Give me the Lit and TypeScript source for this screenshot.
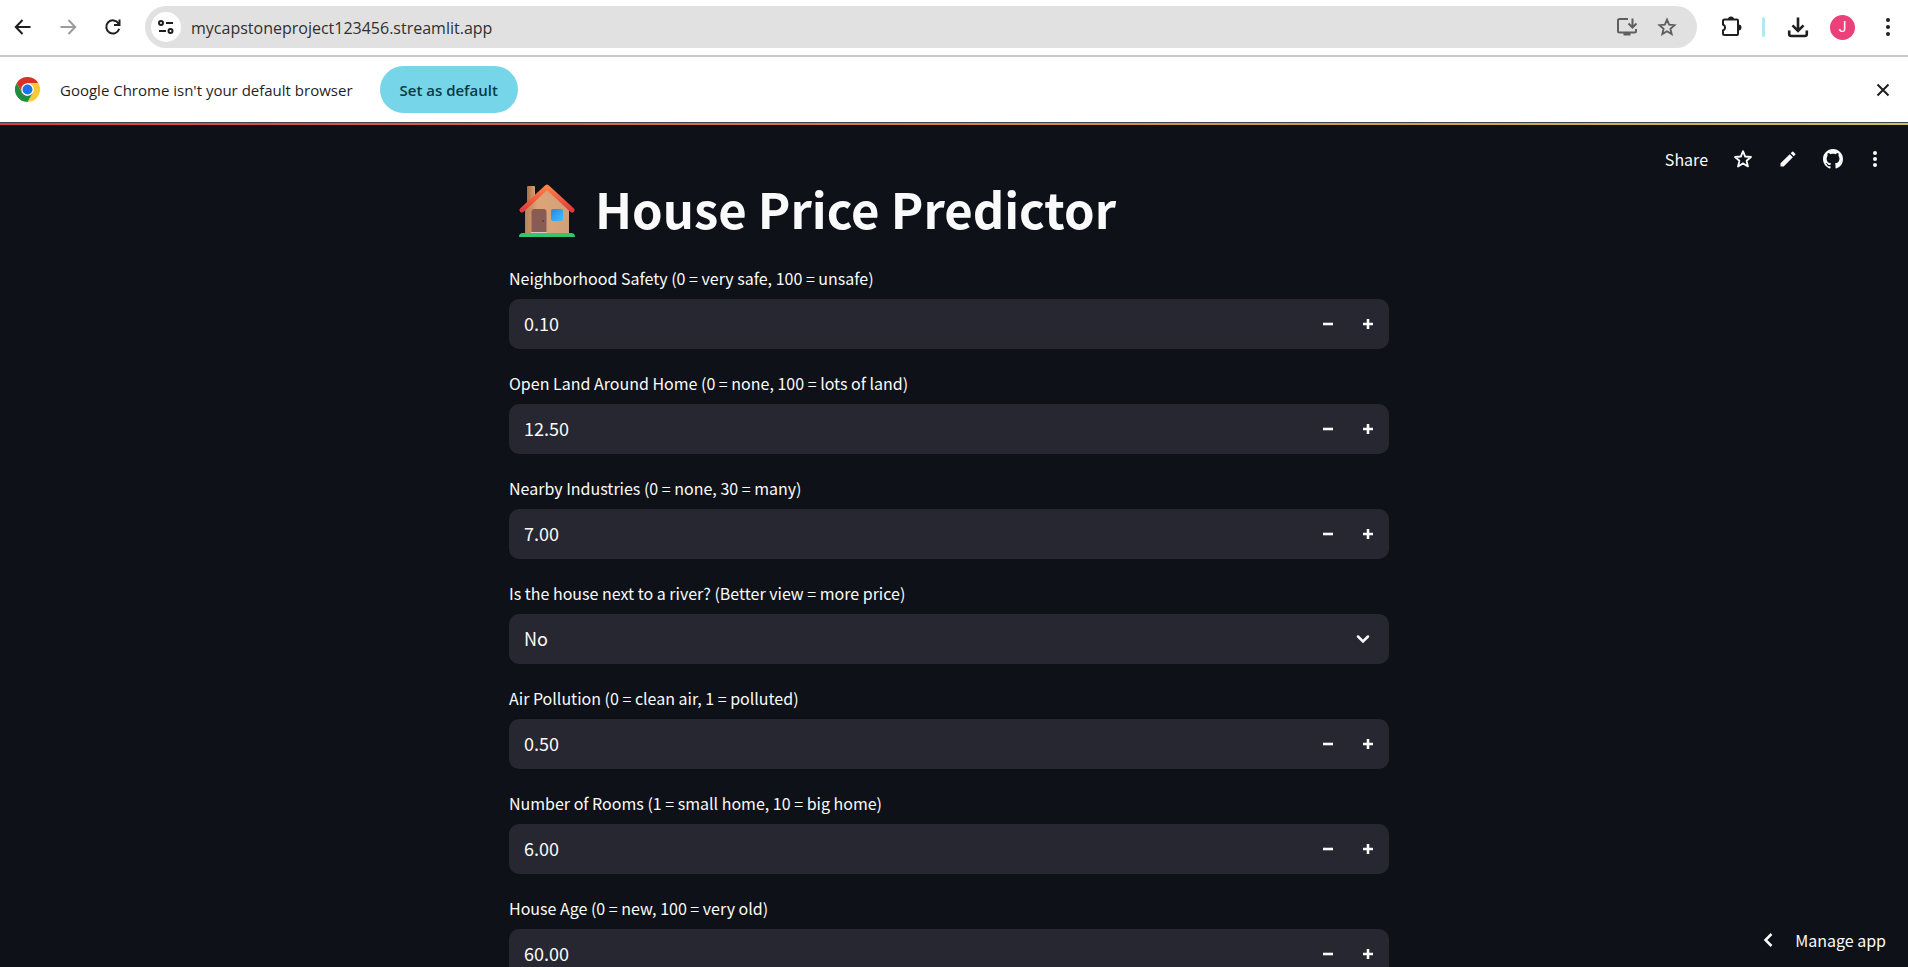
import { LitElement, html, css } from "lit";
import { customElement, property } from "lit/decorators.js";

@customElement("browser-bar")
export class BrowserBar extends LitElement {
  static styles = css`
    :host { display: block; background: #fff; color: #1f1f1f; font-family: "Open Sans", sans-serif; }
    button { border: 0; padding: 0; background: none; color: inherit; font: inherit; display: grid; place-items: center; flex: none; }
    svg { display: block; fill: none; stroke: currentColor; stroke-width: 2; }
    .toolbar { display: flex; align-items: center; height: 55px; box-sizing: border-box; padding: 0 7px 1px 0; }
    .nav { width: 45px; height: 40px; }
    .nav.off { color: #9c9c9c; }
    .omnibox { flex: 1; min-width: 0; display: flex; align-items: center; height: 42px; margin-left: 10px; padding: 0 10px 0 6px; box-sizing: border-box; border-radius: 21px; background: #e1e1e1; }
    .site { width: 30px; height: 30px; border-radius: 50%; background: #fff; }
    .url { flex: 1; min-width: 0; border: 0; outline: 0; background: none; color: #303030; font: 16px/24px "Open Sans", sans-serif; padding: 1px 0 0 10px; }
    .tool { width: 40px; height: 40px; color: #5f5f5f; }
    .right { display: flex; align-items: center; margin-left: 14px; }
    .ext { width: 40px; height: 40px; }
    .sep { width: 3px; height: 20px; margin: 0 13px 0 11px; border-radius: 2px; background: #b5e7f2; }
    .avatar { width: 25px; height: 25px; margin: 0 19px 0 12px; border-radius: 50%; background: #ec407a; color: #fff; font: 14px/25px Roboto, sans-serif; }
    .menu { width: 27px; height: 40px; }
    .info { display: flex; align-items: center; height: 67px; box-sizing: border-box; padding: 0 12px 0 15px; border-top: 2px solid #c9c9c9; }
    .msg { margin: 0 27px 0 20px; font-size: 15px; line-height: 24px; }
    .info .set { height: 47px; padding: 0 20px; border-radius: 24px; background: #76d5e8; color: #063b46; font-size: 15px; font-weight: 600; }
    .close { width: 26px; height: 26px; margin-left: auto; }
  `;

  render() {
    return html`
      <div class="toolbar">
        <button class="nav" aria-label="Back"><svg width="22" height="22" viewBox="0 0 22 22"><path d="M10.500 4 3.800 11l6.700 7M4 11h14.500"/></svg></button>
        <button class="nav off" aria-label="Forward"><svg width="22" height="22" viewBox="0 0 22 22"><path d="M11.500 4l6.700 7-6.700 7M18 11H3.500"/></svg></button>
        <button class="nav" aria-label="Reload"><svg width="22" height="22" viewBox="0 0 22 22"><path d="M17.200 12.800A6.600 6.600 0 1 1 16.500 7.500"/><path d="M17.500 3.500V9H12"/><path d="M18 5v4.500h-4.500z" fill="currentColor" stroke="none"/></svg></button>
        <div class="omnibox">
          <button class="site" aria-label="Site information"><svg width="18" height="18" viewBox="0 0 18 18"><circle cx="4" cy="5" r="2"/><path d="M9 5h7M2 13h7"/><circle cx="13.500" cy="13" r="2"/></svg></button>
          <input class="url" aria-label="Address" .value=${"mycapstoneproject123456.streamlit.app"} />
          <button class="tool" aria-label="Install app"><svg width="22" height="22" viewBox="0 0 22 22"><path d="M12 3H3.500Q2 3 2 4.500v10.500Q2 16.500 3.500 16.500h15Q20 16.500 20 15v-2M16.500 2.500v8M12.500 7.500l4 4 4-4"/><path d="M7.500 18h7" stroke-width="3"/></svg></button>
          <button class="tool" aria-label="Bookmark"><svg width="22" height="22" viewBox="0 0 24 24"><path d="m12 4 2.300 5.500 5.900.500-4.500 3.900 1.400 5.800-5.100-3.100-5.100 3.100 1.400-5.800L3.800 10l5.900-.500Z"/></svg></button>
        </div>
        <div class="right">
          <button class="ext" aria-label="Extensions"><svg width="24" height="24" viewBox="0 0 24 24"><path d="M5.500 4.500H18Q19 4.500 19 5.500V19Q19 20 18 20H5.500Q4 20 4 19V15.500a3.200 3.200 0 0 0 0-6V6Q4 4.500 5.500 4.500Z"/><path d="M9 4.500a3 3 0 0 1 6 0ZM19.500 9.500a3 3 0 0 1 0 6Z" fill="currentColor" stroke="none"/></svg></button>
          <span class="sep"></span>
          <button class="ext" aria-label="Downloads"><svg width="24" height="24" viewBox="0 0 24 24"><path stroke-width="2.600" d="M12 2.500v13M6.500 10.300l5.500 5.500 5.500-5.500M3.200 15.500v3.500Q3.200 21 5.200 21h13.600Q20.800 21 20.800 19v-3.500"/></svg></button>
          <button class="avatar" aria-label="Profile">J</button>
          <button class="menu" aria-label="Menu"><svg width="8" height="20" viewBox="0 0 8 20"><g fill="currentColor" stroke="none"><circle cx="4" cy="3" r="2"/><circle cx="4" cy="10" r="2"/><circle cx="4" cy="17" r="2"/></g></svg></button>
        </div>
      </div>
      <div class="info">
        <svg width="25" height="25" viewBox="0 0 48 48" aria-hidden="true">
          <g stroke="none"><path fill="#d93025" d="M3.200 12A24 24 0 0 1 44.800 12H24L13.600 30Z"/><path fill="#fcc934" d="M44.800 12A24 24 0 0 1 24 48L34.400 30 24 12Z"/><path fill="#1e8e3e" d="M24 48A24 24 0 0 1 3.200 12L13.600 30Q18 36 24 36L34.400 30Z"/><circle cx="24" cy="24" r="12" fill="#fff"/><circle cx="24" cy="24" r="9.500" fill="#1a73e8"/></g>
        </svg>
        <span class="msg">Google Chrome isn't your default browser</span>
        <button class="set">Set as default</button>
        <button class="close" aria-label="Close"><svg width="14" height="14" viewBox="0 0 14 14"><path d="m1.500 1.500 11 11m0-11-11 11"/></svg></button>
      </div>
    `;
  }
}

const fieldStyles = css`
  :host { display: block; }
  .label { display: block; height: 30px; font-size: 16px; line-height: 18px; }
  .box { display: flex; align-items: center; height: 50px; box-sizing: border-box; padding-right: 1px; border-radius: 10px; background: #262730; }
  .value { flex: 1; min-width: 0; height: 50px; box-sizing: border-box; padding: 0 15px 3px; border: 0; outline: 0; background: none; color: inherit; font: inherit; font-size: 18px; appearance: none; }
`;

@customElement("number-field")
export class NumberField extends LitElement {
  static styles = [fieldStyles, css`
    .step { width: 40px; height: 50px; padding: 0; border: 0; background: none; color: inherit; display: grid; place-items: center; }
    .step svg { display: block; }
  `];
  @property() label = "";
  @property() value = "";

  render() {
    return html`
      <label class="label" for="value">${this.label}</label>
      <div class="box">
        <input class="value" id="value" inputmode="decimal" .value=${this.value} />
        <button class="step" aria-label="Decrease"><svg width="10" height="10" viewBox="0 0 10 10"><path d="M0 5h10" stroke="currentColor" stroke-width="2.600"/></svg></button>
        <button class="step" aria-label="Increase"><svg width="10" height="10" viewBox="0 0 10 10"><path d="M0 5h10M5 0v10" stroke="currentColor" stroke-width="2.600"/></svg></button>
      </div>
    `;
  }
}

@customElement("choice-field")
export class ChoiceField extends LitElement {
  static styles = [fieldStyles, css`
    .box { display: grid; }
    .value { grid-area: 1 / 1; }
    .arrow { grid-area: 1 / 1; justify-self: end; margin-right: 18px; pointer-events: none; }
  `];
  @property() label = "";

  render() {
    return html`
      <label class="label" for="choice">${this.label}</label>
      <div class="box">
        <select class="value" id="choice"><option>No</option><option>Yes</option></select>
        <svg class="arrow" width="14" height="10" viewBox="0 0 14 10" fill="none" stroke="currentColor" stroke-width="2.500" stroke-linecap="round"><path d="m2 2.500 5 5 5-5"/></svg>
      </div>
    `;
  }
}

@customElement("app-root")
export class AppRoot extends LitElement {
  static styles = css`
    :host { display: flex; flex-direction: column; height: 100vh; overflow: hidden; background: #0e1117; color: #fafafa; font-family: "Noto Sans CJK SC", "Source Sans Pro", sans-serif; }
    .strip { flex: none; height: 2px; border-top: 1px solid #3c4650; background: linear-gradient(90deg, #d43f3f, #c9c25a); }
    .page { position: relative; flex: 1; min-height: 0; overflow: hidden; padding-right: 10px; }
    .actions { position: absolute; top: 14px; right: 13px; display: flex; align-items: center; }
    .actions svg { display: block; }
    .actions button, .manage { border: 0; padding: 0; background: none; color: inherit; font: inherit; font-size: 16px; line-height: 24px; }
    .actions button { display: grid; place-items: center; width: 45px; height: 40px; }
    .actions .share { width: auto; padding: 0 12px; }
    .actions .more { width: 40px; }
    .main { width: 880px; max-width: 100%; margin: 0 auto; padding: 50px 0; display: grid; gap: 25px; }
    .title { display: flex; align-items: center; gap: 20px; margin: 0; padding: 0 10px; height: 69px; font-size: 49px; line-height: 64px; font-weight: 700; white-space: nowrap; }
    .name { padding-bottom: 4px; }
    .manage { position: absolute; right: 0; bottom: 0; display: flex; align-items: center; gap: 22px; padding: 13px 22px 15px 30px; background: #0e1117; }
  `;

  render() {
    return html`
      <browser-bar></browser-bar>
      <div class="strip"></div>
      <div class="page">
        <main class="main">
          <h1 class="title">
            <svg width="56" height="56" viewBox="0 0 56 56" aria-hidden="true">
              <defs>
                <linearGradient id="wall"><stop offset="0" stop-color="#b98056"/><stop offset=".3" stop-color="#dfa477"/><stop offset="1" stop-color="#cda27d"/></linearGradient>
                <linearGradient id="roof" x2="0" y2="1"><stop offset="0" stop-color="#ff8248"/><stop offset="1" stop-color="#e23b3a"/></linearGradient>
                <linearGradient id="chimney"><stop offset="0" stop-color="#a86f45"/><stop offset="1" stop-color="#dca26c"/></linearGradient>
                <linearGradient id="pane" x2="1" y2="1"><stop offset="0" stop-color="#2589e6"/><stop offset="1" stop-color="#42bdfa"/></linearGradient>
              </defs>
              <path fill="url(#chimney)" d="M8 5q0-1 1-1h6q1 0 1 1v18H8z"/>
              <path fill="url(#wall)" d="M6 27 28 6l22 21v24H6z"/>
              <path fill="none" stroke="url(#roof)" stroke-width="5" stroke-linecap="round" stroke-linejoin="round" d="M3 28 28 5l25 23"/>
              <path fill="#895b55" d="M12.500 51V30q0-3 3-3h9q3 0 3 3v21z"/>
              <circle cx="24" cy="39" r="1" fill="#5f3a38"/>
              <path fill="#d5c9c4" d="M12 50h16v2H12z"/>
              <rect x="32" y="27" width="12" height="12" rx="2" fill="url(#pane)"/>
              <path fill="#36c46f" d="M0 55q0-4 4-4h48q4 0 4 4z"/>
            </svg>
            <span class="name">House Price Predictor</span>
          </h1>
          <number-field label="Neighborhood Safety (0 = very safe, 100 = unsafe)" value="0.10"></number-field>
          <number-field label="Open Land Around Home (0 = none, 100 = lots of land)" value="12.50"></number-field>
          <number-field label="Nearby Industries (0 = none, 30 = many)" value="7.00"></number-field>
          <choice-field label="Is the house next to a river? (Better view = more price)"></choice-field>
          <number-field label="Air Pollution (0 = clean air, 1 = polluted)" value="0.50"></number-field>
          <number-field label="Number of Rooms (1 = small home, 10 = big home)" value="6.00"></number-field>
          <number-field label="House Age (0 = new, 100 = very old)" value="60.00"></number-field>
        </main>
        <div class="actions">
          <button class="share">Share</button>
          <button aria-label="Favorite"><svg width="22" height="22" viewBox="0 0 24 24" fill="none" stroke="currentColor" stroke-width="2" stroke-linejoin="round"><path d="m12 3.500 2.400 5.800 6.300.500-4.800 4.100 1.500 6.200-5.400-3.300-5.400 3.300 1.500-6.200-4.800-4.100 6.300-.500Z"/></svg></button>
          <button aria-label="Edit"><svg width="20" height="20" viewBox="0 0 24 24" fill="currentColor"><path d="M3 17.200V21h3.800L17.800 9.900 14.100 6.200zM20.700 7a1 1 0 0 0 0-1.400l-2.300-2.300a1 1 0 0 0-1.400 0l-1.800 1.800 3.700 3.700z"/></svg></button>
          <button aria-label="GitHub"><svg width="20" height="20" viewBox="0 0 16 16" fill="currentColor"><path d="M8 0C3.580 0 0 3.580 0 8c0 3.540 2.290 6.530 5.470 7.590.4.070.550-.170.550-.380 0-.190-.010-.820-.010-1.490-2.010.370-2.530-.490-2.690-.940-.090-.230-.480-.940-.820-1.130-.280-.150-.680-.520-.010-.530.630-.010 1.080.580 1.230.820.720 1.210 1.870.870 2.330.660.070-.520.280-.870.510-1.070-1.780-.200-3.640-.890-3.640-3.950 0-.870.310-1.590.820-2.150-.080-.200-.360-1.020.080-2.120 0 0 .670-.210 2.200.820.640-.180 1.320-.270 2-.270s1.360.090 2 .270c1.530-1.040 2.200-.820 2.200-.820.440 1.100.160 1.920.080 2.120.510.560.820 1.270.820 2.150 0 3.070-1.870 3.750-3.650 3.950.290.250.540.730.540 1.480 0 1.070-.010 1.930-.010 2.200 0 .210.150.460.550.380A8.010 8.010 0 0 0 16 8c0-4.420-3.580-8-8-8"/></svg></button>
          <button class="more" aria-label="More"><svg width="8" height="20" viewBox="0 0 8 20" fill="currentColor"><circle cx="4" cy="4" r="2"/><circle cx="4" cy="10" r="2"/><circle cx="4" cy="16" r="2"/></svg></button>
        </div>
        <button class="manage"><svg width="10" height="14" viewBox="0 0 10 14" fill="none" stroke="currentColor" stroke-width="2.500"><path d="M8.500 1 2.500 7l6 6"/></svg>Manage app</button>
      </div>
    `;
  }
}
